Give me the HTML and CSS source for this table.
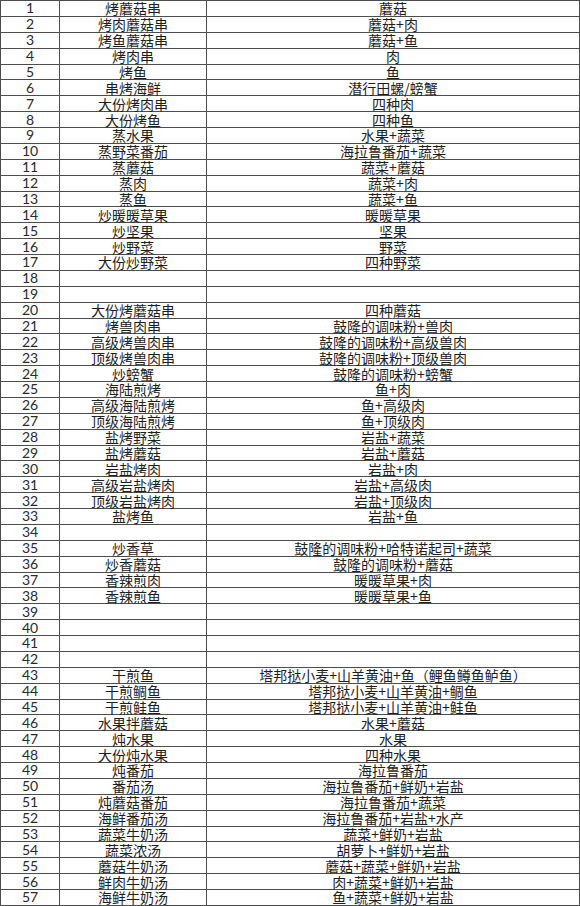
FILE: index.html
```html
<!DOCTYPE html>
<html lang="zh">
<head>
<meta charset="utf-8">
<link rel="stylesheet" href="styles.css">
</head>
<body>
<table class="recipes">
<colgroup><col class="c-num"><col class="c-name"><col class="c-ing"></colgroup>
<tbody>
<tr><td class="num">1</td><td>烤蘑菇串</td><td>蘑菇</td></tr>
<tr><td class="num">2</td><td>烤肉蘑菇串</td><td>蘑菇+肉</td></tr>
<tr><td class="num">3</td><td>烤鱼蘑菇串</td><td>蘑菇+鱼</td></tr>
<tr><td class="num">4</td><td>烤肉串</td><td>肉</td></tr>
<tr><td class="num">5</td><td>烤鱼</td><td>鱼</td></tr>
<tr><td class="num">6</td><td>串烤海鲜</td><td>潜行田螺/螃蟹</td></tr>
<tr><td class="num">7</td><td>大份烤肉串</td><td>四种肉</td></tr>
<tr><td class="num">8</td><td>大份烤鱼</td><td>四种鱼</td></tr>
<tr><td class="num">9</td><td>蒸水果</td><td>水果+蔬菜</td></tr>
<tr><td class="num">10</td><td>蒸野菜番茄</td><td>海拉鲁番茄+蔬菜</td></tr>
<tr><td class="num">11</td><td>蒸蘑菇</td><td>蔬菜+蘑菇</td></tr>
<tr><td class="num">12</td><td>蒸肉</td><td>蔬菜+肉</td></tr>
<tr><td class="num">13</td><td>蒸鱼</td><td>蔬菜+鱼</td></tr>
<tr><td class="num">14</td><td>炒暖暖草果</td><td>暖暖草果</td></tr>
<tr><td class="num">15</td><td>炒坚果</td><td>坚果</td></tr>
<tr><td class="num">16</td><td>炒野菜</td><td>野菜</td></tr>
<tr><td class="num">17</td><td>大份炒野菜</td><td>四种野菜</td></tr>
<tr><td class="num">18</td><td></td><td></td></tr>
<tr><td class="num">19</td><td></td><td></td></tr>
<tr><td class="num">20</td><td>大份烤蘑菇串</td><td>四种蘑菇</td></tr>
<tr><td class="num">21</td><td>烤兽肉串</td><td>鼓隆的调味粉+兽肉</td></tr>
<tr><td class="num">22</td><td>高级烤兽肉串</td><td>鼓隆的调味粉+高级兽肉</td></tr>
<tr><td class="num">23</td><td>顶级烤兽肉串</td><td>鼓隆的调味粉+顶级兽肉</td></tr>
<tr><td class="num">24</td><td>炒螃蟹</td><td>鼓隆的调味粉+螃蟹</td></tr>
<tr><td class="num">25</td><td>海陆煎烤</td><td>鱼+肉</td></tr>
<tr><td class="num">26</td><td>高级海陆煎烤</td><td>鱼+高级肉</td></tr>
<tr><td class="num">27</td><td>顶级海陆煎烤</td><td>鱼+顶级肉</td></tr>
<tr><td class="num">28</td><td>盐烤野菜</td><td>岩盐+蔬菜</td></tr>
<tr><td class="num">29</td><td>盐烤蘑菇</td><td>岩盐+蘑菇</td></tr>
<tr><td class="num">30</td><td>岩盐烤肉</td><td>岩盐+肉</td></tr>
<tr><td class="num">31</td><td>高级岩盐烤肉</td><td>岩盐+高级肉</td></tr>
<tr><td class="num">32</td><td>顶级岩盐烤肉</td><td>岩盐+顶级肉</td></tr>
<tr><td class="num">33</td><td>盐烤鱼</td><td>岩盐+鱼</td></tr>
<tr><td class="num">34</td><td></td><td></td></tr>
<tr><td class="num">35</td><td>炒香草</td><td>鼓隆的调味粉+哈特诺起司+蔬菜</td></tr>
<tr><td class="num">36</td><td>炒香蘑菇</td><td>鼓隆的调味粉+蘑菇</td></tr>
<tr><td class="num">37</td><td>香辣煎肉</td><td>暖暖草果+肉</td></tr>
<tr><td class="num">38</td><td>香辣煎鱼</td><td>暖暖草果+鱼</td></tr>
<tr><td class="num">39</td><td></td><td></td></tr>
<tr><td class="num">40</td><td></td><td></td></tr>
<tr><td class="num">41</td><td></td><td></td></tr>
<tr><td class="num">42</td><td></td><td></td></tr>
<tr><td class="num">43</td><td>干煎鱼</td><td>塔邦挞小麦+山羊黄油+鱼（鲤鱼鳟鱼鲈鱼）</td></tr>
<tr><td class="num">44</td><td>干煎鲷鱼</td><td>塔邦挞小麦+山羊黄油+鲷鱼</td></tr>
<tr><td class="num">45</td><td>干煎鲑鱼</td><td>塔邦挞小麦+山羊黄油+鲑鱼</td></tr>
<tr><td class="num">46</td><td>水果拌蘑菇</td><td>水果+蘑菇</td></tr>
<tr><td class="num">47</td><td>炖水果</td><td>水果</td></tr>
<tr><td class="num">48</td><td>大份炖水果</td><td>四种水果</td></tr>
<tr><td class="num">49</td><td>炖番茄</td><td>海拉鲁番茄</td></tr>
<tr><td class="num">50</td><td>番茄汤</td><td>海拉鲁番茄+鲜奶+岩盐</td></tr>
<tr><td class="num">51</td><td>炖蘑菇番茄</td><td>海拉鲁番茄+蔬菜</td></tr>
<tr><td class="num">52</td><td>海鲜番茄汤</td><td>海拉鲁番茄+岩盐+水产</td></tr>
<tr><td class="num">53</td><td>蔬菜牛奶汤</td><td>蔬菜+鲜奶+岩盐</td></tr>
<tr><td class="num">54</td><td>蔬菜浓汤</td><td>胡萝卜+鲜奶+岩盐</td></tr>
<tr><td class="num">55</td><td>蘑菇牛奶汤</td><td>蘑菇+蔬菜+鲜奶+岩盐</td></tr>
<tr><td class="num">56</td><td>鲜肉牛奶汤</td><td>肉+蔬菜+鲜奶+岩盐</td></tr>
<tr><td class="num">57</td><td>海鲜牛奶汤</td><td>鱼+蔬菜+鲜奶+岩盐</td></tr>
</tbody>
</table>
</body>
</html>
```
FILE: styles.css
```css
html, body {
  margin: 0;
  padding: 0;
  background: #ffffff;
}
.recipes {
  border-collapse: collapse;
  table-layout: fixed;
  width: 579px;
  font-family: "Noto Sans CJK SC", "Noto Sans", sans-serif;
  font-size: 14px;
  color: #1e1e1e;
}
.c-num { width: 59px; }
.c-name { width: 147px; }
.c-ing { width: 373px; }
.recipes tr {
  height: 15.88px;
}
.recipes td {
  border: 1px solid #4d4d4d;
  padding: 0;
  text-align: center;
  line-height: 14px;
  height: 14.88px;
  white-space: nowrap;
}
.recipes td.num {
  font-family: Lato, "Liberation Sans", sans-serif;
  font-size: 14px;
  color: #2a2a2a;
}
```
